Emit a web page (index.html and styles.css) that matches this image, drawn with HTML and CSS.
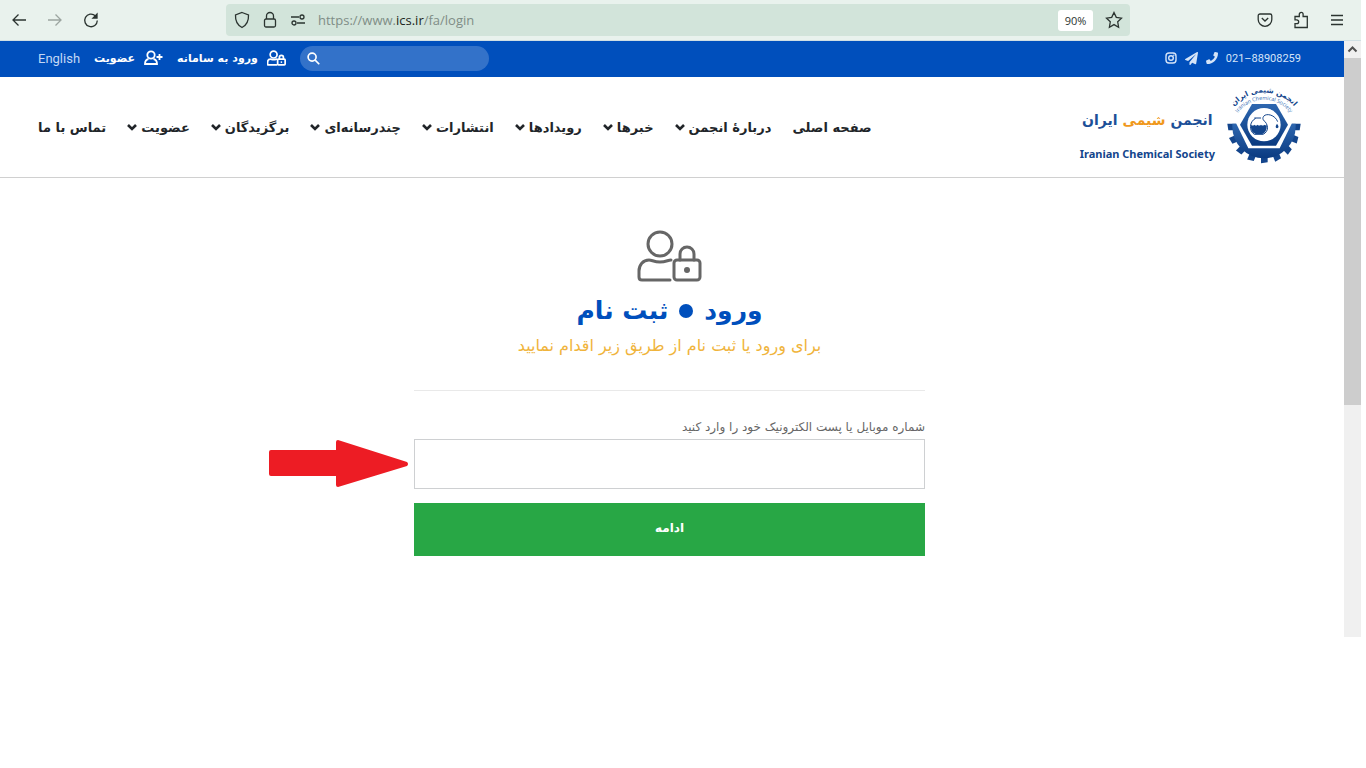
FILE: index.html
```
<!DOCTYPE html>
<html lang="fa">
<head>
    <meta charset="UTF-8">
    <meta name="viewport" content="width=device-width, initial-scale=1.0">
    <title>ورود - انجمن شیمی ایران</title>
    <link rel="stylesheet" href="styles.css">
</head>
<body>
    <svg class="defs" aria-hidden="true">
        <symbol id="chevron" viewBox="0 0 10 8"><path d="M1 2l4 4 4-4" fill="none" stroke="currentColor" stroke-width="2.600"/></symbol>
        <symbol id="user-lock" viewBox="0 0 66 54">
            <g fill="none" stroke="currentColor" stroke-linecap="round">
                <circle cx="23" cy="15" r="12"/>
                <path d="M34 31c-3 0-5 2-11 2s-8-2-11-2C6 31 2 36 2 42v6c0 2 1 3 3 3h28"/>
                <rect x="37" y="31" width="26" height="20" rx="3"/>
                <path d="M43 31v-6a7 7 0 0 1 14 0v6"/>
            </g>
            <circle cx="50" cy="41" r="3" fill="currentColor"/>
        </symbol>
    </svg>

    <div class="browser">
        <div class="toolbar">
            <div class="tools">
                <button aria-label="Back"><svg width="16" height="16" viewBox="0 0 16 16"><path d="M15 8H2M7.500 2.500L2 8l5.500 5.500"/></svg></button>
                <button aria-label="Forward" class="off"><svg width="16" height="16" viewBox="0 0 16 16"><path d="M1 8h13M8.500 2.500L14 8l-5.500 5.500"/></svg></button>
                <button aria-label="Reload"><svg width="16" height="16" viewBox="0 0 16 16"><path d="M12.300 3.800A6.300 6.300 0 1 0 14.300 8.500"/><path d="M14 2v4h-4z" class="solid"/></svg></button>
            </div>
            <div class="urlbar">
                <svg width="16" height="18" viewBox="0 0 16 18"><path d="M8 1.500l6.500 2.500c.3 6-1.700 10-6.500 12.500C3.200 14 1.200 10 1.500 4z"/></svg>
                <svg width="16" height="18" viewBox="0 0 16 18"><rect x="2.500" y="8" width="11" height="8" rx="1.500"/><path d="M4.500 8V5a3.500 3.500 0 0 1 7 0v3"/></svg>
                <svg width="16" height="18" viewBox="0 0 16 18"><path d="M1 6h8M7 12h8"/><circle cx="12" cy="6" r="2"/><circle cx="4" cy="12" r="2"/></svg>
                <div class="url">https://www.<b>ics.ir</b>/fa/login</div>
                <button class="zoom">90%</button>
                <svg width="18" height="18" viewBox="0 0 18 18"><path d="M9 1.500l2.300 4.900 5.200.7-3.800 3.700.9 5.400L9 13.600l-4.600 2.600.9-5.400L1.500 7.100l5.200-.7z"/></svg>
            </div>
            <div class="tools end">
                <button aria-label="Pocket"><svg width="16" height="16" viewBox="0 0 16 16"><path d="M3 2h10a1.800 1.800 0 0 1 1.800 1.800V7.500a6.800 6.800 0 0 1-13.600 0V3.800A1.800 1.800 0 0 1 3 2zM4.800 6L8 9l3.200-3"/></svg></button>
                <button aria-label="Extensions"><svg width="16" height="18" viewBox="0 0 16 18"><path d="M2 5.500h4.300V3.300a1.900 1.900 0 0 1 3.800 0v2.200h4.200v11H2v-3.800h1.800a1.900 1.900 0 0 0 0-3.800H2z"/></svg></button>
                <button aria-label="Menu"><svg width="16" height="16" viewBox="0 0 16 16"><path d="M2 3.500h12M2 8h12M2 12.500h12"/></svg></button>
            </div>
        </div>

        <div class="viewport">
            <div class="site" dir="rtl">
                <div class="topbar">
                    <div class="contact">
                        <a href="#" class="phone" dir="ltr">021–88908259</a>
                        <a href="#" aria-label="تلفن"><svg width="12" height="12" viewBox="0 0 512 512"><path fill="currentColor" d="M493 25L389 1c-11-3-23 3-27 14l-48 112c-4 10-1 21 7 28l61 50a371 371 0 0 1-177 177l-50-61c-7-8-18-11-28-7L15 362c-11 4-17 16-14 27l24 104c3 11 12 19 24 19 256 0 463-207 463-463 0-12-8-21-19-24z"/></svg></a>
                        <a href="#" aria-label="تلگرام"><svg width="13" height="13" viewBox="0 0 512 512"><path fill="currentColor" d="M476 3L12 271c-18 10-16 36 2 43l107 45L409 105c6-5 13 2 9 8L176 407v81c0 23 28 33 42 15l64-77 125 52c14 6 30-3 33-18l72-432c3-20-18-35-36-25z"/></svg></a>
                        <a href="#" aria-label="اینستاگرام"><svg width="12" height="12" viewBox="0 0 12 12"><g fill="none" stroke="currentColor" stroke-width="1.400"><rect x="1" y="1" width="10" height="10" rx="3"/><circle cx="6" cy="6" r="2.300"/></g><circle cx="8.800" cy="3.200" r=".7" fill="currentColor"/></svg></a>
                    </div>
                    <div class="account">
                        <form class="search">
                            <input type="text" aria-label="جستجو">
                            <button type="button" aria-label="جستجو"><svg width="13" height="13" viewBox="0 0 14 14"><g fill="none" stroke="currentColor" stroke-width="1.800"><circle cx="5.500" cy="5.500" r="4.300"/><path d="M8.800 8.800l4.400 4.400"/></g></svg></button>
                        </form>
                        <a href="#"><svg class="small-icon" width="19" height="16"><use href="#user-lock"/></svg>ورود به سامانه</a>
                        <a href="#"><svg width="19" height="16" viewBox="0 0 19 16"><g fill="none" stroke="currentColor" stroke-width="1.800"><circle cx="7" cy="5" r="3.700"/><path d="M4.500 9C2 9.500 1 11 1 14h12c0-3-1-4.500-3.500-5M15.500 4v6M12.500 7h6"/></g></svg>عضویت</a>
                        <a href="#" class="lang">English</a>
                    </div>
                </div>

                <header class="header">
                    <a href="#" class="logo">
                        <svg class="emblem" width="74" height="78" viewBox="0 6 222 234">
                            <defs>
                                <linearGradient id="blue" x1="0" y1="0" x2="0" y2="1"><stop offset="0" stop-color="#2e67b0"/><stop offset="1" stop-color="#0a3a80"/></linearGradient>
                                <path id="arcOuter" d="M-4 108A119 119 0 0 1 226 108"/>
                                <path id="arcInner" d="M20 103A98 98 0 0 1 202 103"/>
                            </defs>
                            <g fill="#13458c">
                                <path id="tooth" d="M1 113h26v20H4z"/>
                                <use href="#tooth" transform="rotate(-22.500 111 122)"/>
                                <use href="#tooth" transform="rotate(-45 111 122)"/>
                                <use href="#tooth" transform="rotate(-67.500 111 122)"/>
                                <use href="#tooth" transform="rotate(-90 111 122)"/>
                                <use href="#tooth" transform="rotate(-112.500 111 122)"/>
                                <use href="#tooth" transform="rotate(-135 111 122)"/>
                                <use href="#tooth" transform="rotate(-157.500 111 122)"/>
                                <path d="M195 113h26l-3 20h-23z"/>
                            </g>
                            <path fill="url(#blue)" d="M16 113h190v9a95 95 0 0 1-190 0z"/>
                            <path fill="#fff" d="M111 44h46l37 69-36 74H64l-36-74 37-69z"/>
                            <path fill="url(#blue)" d="M39 116l36-62h72l36 62-36 63H75z"/>
                            <circle cx="111" cy="116" r="50" fill="#fff"/>
                            <path fill="none" stroke="#13458c" stroke-width="3" d="M82 96h20M86 97c-20 10-20 38-4 48h26c18-8 18-30 0-44-4-22 34-20 44 6"/>
                            <path fill="#13458c" d="M72 116q5 5 10 0 5 5 10 0 5 5 10 0 5 5 10 0 4 4 7 0c2 14-4 24-13 28H86c-10-3-16-14-14-28zM150 113q9 12 0 14-8-2 0-14z"/>
                            <text class="ring-fa"><textPath href="#arcOuter" startOffset="50%">انجمن شیمی ایران</textPath></text>
                            <text class="ring-en"><textPath href="#arcInner" startOffset="50%">Iranian Chemical Society</textPath></text>
                        </svg>
                        <span class="name">
                            <span class="name-fa">انجمن <em>شیمی</em> ایران</span>
                            <span class="name-en" dir="ltr">Iranian Chemical Society</span>
                        </span>
                    </a>
                    <nav class="nav">
                        <a href="#">صفحه اصلی</a>
                        <a href="#">دربارهٔ انجمن<svg width="10" height="8"><use href="#chevron"/></svg></a>
                        <a href="#">خبرها<svg width="10" height="8"><use href="#chevron"/></svg></a>
                        <a href="#">رویدادها<svg width="10" height="8"><use href="#chevron"/></svg></a>
                        <a href="#">انتشارات<svg width="10" height="8"><use href="#chevron"/></svg></a>
                        <a href="#">چندرسانه‌ای<svg width="10" height="8"><use href="#chevron"/></svg></a>
                        <a href="#">برگزیدگان<svg width="10" height="8"><use href="#chevron"/></svg></a>
                        <a href="#">عضویت<svg width="10" height="8"><use href="#chevron"/></svg></a>
                        <a href="#">تماس با ما</a>
                    </nav>
                </header>

                <main class="main">
                    <form class="login">
                        <svg class="big-icon" width="66" height="54"><use href="#user-lock"/></svg>
                        <h1>ورود <i></i> ثبت نام</h1>
                        <p>برای ورود یا ثبت نام از طریق زیر اقدام نمایید</p>
                        <hr>
                        <label for="user">شماره موبایل یا پست الکترونیک خود را وارد کنید</label>
                        <div class="field">
                            <input type="text" id="user">
                            <svg class="pointer" width="140" height="48" viewBox="0 0 140 48"><path d="M2 10h65V2q0-2 2-2l69 22q2 2 0 4L69 47q-2 0-2-2v-9H2q-2 0-2-2V12q0-2 2-2z"/></svg>
                        </div>
                        <button type="button" class="submit">ادامه</button>
                    </form>
                </main>
            </div>
            <div class="scrollbar">
                <svg width="17" height="17" viewBox="0 0 17 17"><path d="M4.500 10.500l4-4 4 4" fill="none" stroke="#505050" stroke-width="2"/></svg>
                <div class="thumb"></div>
            </div>
        </div>
    </div>
</body>
</html>
```
FILE: styles.css
```
* { box-sizing: border-box; }
body {
    margin: 0;
    background-color: #fff;
    font-family: "DejaVu Sans", sans-serif;
}
a { color: inherit; text-decoration: none; }
button { border: 0; padding: 0; background: none; color: inherit; cursor: pointer; }
svg { display: block; flex-shrink: 0; }
.defs { position: absolute; width: 0; height: 0; }
.browser { margin-right: 5px; }

/* browser toolbar */
.toolbar {
    display: flex;
    align-items: center;
    height: 41px;
    padding: 0 16px 0 11px;
    background-color: #e9f2ed;
    border-bottom: 1px solid #d0dfe4;
    color: #2b3430;
}
.toolbar svg { fill: none; stroke: currentColor; stroke-width: 1.3; }
.toolbar svg .solid { fill: currentColor; }
.tools { display: flex; align-items: center; gap: 20px; width: 215px; }
.tools.end { justify-content: flex-end; }
.off { opacity: 0.4; }
.urlbar {
    display: flex;
    flex: 1;
    align-items: center;
    gap: 12px;
    height: 32px;
    padding: 0 7px 0 8px;
    border-radius: 4px;
    background-color: #d2e4da;
}
.url { flex: 1; font: 13px "Open Sans", sans-serif; color: #7f8d86; }
.url b { font-weight: 400; color: #1c2420; }
.zoom {
    width: 35px;
    height: 21px;
    border-radius: 3px;
    background-color: #fff;
    font: 11px "Open Sans", sans-serif;
}

/* page */
.viewport { display: flex; }
.site { flex: 1; min-width: 0; }
.topbar, .header, .main { padding: 0 43px 0 38px; }
.topbar {
    display: flex;
    justify-content: space-between;
    height: 36px;
    padding-bottom: 2px;
    background-color: #004fbc;
    color: #d5e4f8;
}
.contact, .account { display: flex; align-items: center; }
.contact { gap: 8px; }
.phone { font: 11px Roboto, sans-serif; }
.account { gap: 14px; font-size: 11px; font-weight: 700; }
.account a { display: flex; align-items: center; gap: 9px; color: #fff; }
.account .lang { font: 13px Roboto, sans-serif; color: #c3d8f5; }
.small-icon { stroke-width: 6; }
.search {
    display: flex;
    align-items: center;
    width: 189px;
    height: 25px;
    padding: 0 7px;
    border-radius: 13px;
    background-color: #3372c9;
    color: #fff;
}
.search input { flex: 1; min-width: 0; border: 0; background: none; color: #fff; outline: none; }

.header {
    display: flex;
    align-items: center;
    justify-content: space-between;
    height: 101px;
    border-bottom: 1px solid #d0d0d0;
}
.logo { display: flex; align-items: center; gap: 12px; color: #13458c; }
.emblem { overflow: visible; }
.ring-fa { font-size: 22px; font-weight: 700; fill: #13458c; text-anchor: middle; }
.ring-en { font: 16px "Open Sans", sans-serif; fill: #2e67b0; text-anchor: middle; }
.name { display: flex; flex-direction: column; align-items: center; }
.name-fa { font-size: 14px; font-weight: 700; line-height: 52px; color: #1c4f98; }
.name-fa em { font-style: normal; color: #f0981c; }
.name-en { font: 700 11px "Noto Sans", sans-serif; }
.nav {
    display: flex;
    justify-content: space-between;
    width: 66%;
    font-size: 13px;
    font-weight: 700;
    color: #212529;
}
.nav a { display: flex; align-items: center; gap: 4px; white-space: nowrap; }

.login {
    display: flex;
    flex-direction: column;
    max-width: 511px;
    margin: 0 auto;
    padding-top: 51px;
}
.big-icon { align-self: center; stroke-width: 3; color: #666; }
.login h1 {
    display: flex;
    align-items: center;
    justify-content: center;
    gap: 11px;
    margin: 2px 0 0;
    font-size: 25px;
    line-height: 52px;
    color: #004fbc;
}
.login h1 i { width: 14px; height: 14px; border-radius: 50%; background-color: #004fbc; }
.login p { margin: 0; font-size: 16px; line-height: 18px; text-align: center; color: #f0b43c; }
.login hr { width: 100%; margin: 35px 0 24px; border: 0; border-top: 1px solid #e9e9e9; }
.login label { font-size: 12px; line-height: 24px; color: #666; }
.field { position: relative; }
.field input {
    display: block;
    width: 100%;
    height: 50px;
    padding: 0 12px;
    border: 1px solid #ced0d2;
    font-size: 14px;
}
.pointer { position: absolute; top: 1px; right: 100%; margin-right: 5px; fill: #ed1c24; }
.submit {
    height: 53px;
    margin-top: 14px;
    padding-bottom: 4px;
    background-color: #28a745;
    color: #fff;
    font: 700 12px "DejaVu Sans", sans-serif;
}

.scrollbar { width: 17px; height: 596px; background-color: #f0f0f0; }
.thumb { height: 347px; background-color: #cdcdcd; }
```
